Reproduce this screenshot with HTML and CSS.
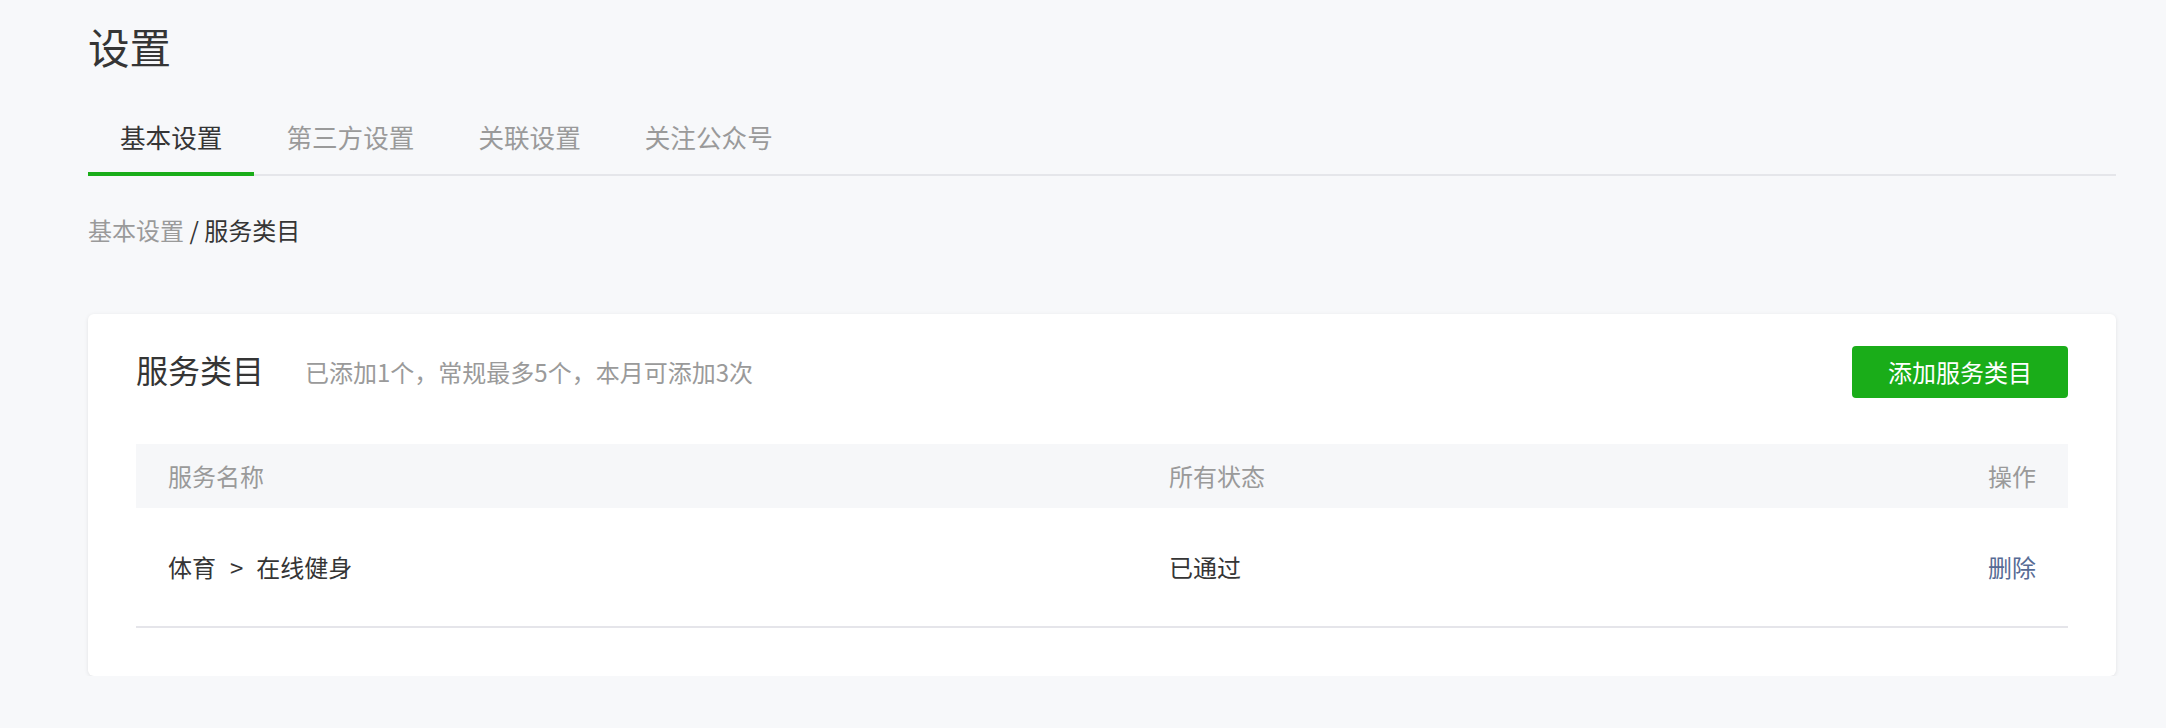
FILE: index.html
```html
<!DOCTYPE html>
<html lang="zh-CN">
<head>
<meta charset="utf-8">
<title>设置</title>
<link rel="stylesheet" href="styles.css">
</head>
<body>
<div class="page">
  <h1 class="page-title">设置</h1>
  <nav class="tabs">
    <a class="tab active">基本设置</a>
    <a class="tab">第三方设置</a>
    <a class="tab">关联设置</a>
    <a class="tab">关注公众号</a>
  </nav>
  <div class="breadcrumb"><span class="crumb-link">基本设置</span> / <span class="crumb-current">服务类目</span></div>
  <section class="card">
    <div class="card-head">
      <h2 class="card-title">服务类目</h2>
      <span class="card-hint">已添加1个，常规最多5个，本月可添加3次</span>
      <button class="btn-primary">添加服务类目</button>
    </div>
    <div class="table">
      <div class="thead">
        <div class="cell c-name">服务名称</div>
        <div class="cell c-status">所有状态</div>
        <div class="cell c-op">操作</div>
      </div>
      <div class="trow">
        <div class="cell c-name">体育<span class="sep">&gt;</span>在线健身</div>
        <div class="cell c-status">已通过</div>
        <div class="cell c-op"><a class="link">删除</a></div>
      </div>
    </div>
  </section>
</div>
</body>
</html>
```

FILE: styles.css
```css
html, body {
  margin: 0;
  padding: 0;
  background: #f7f8fa;
}
body {
  font-family: "Noto Sans CJK SC", "Noto Sans", sans-serif;
  color: #353535;
}
.page {
  width: 2028px;
  padding: 18px 0 0 88px;
}
.page-title {
  margin: 0;
  font-size: 41.6px;
  line-height: 56px;
  font-weight: 400;
  color: #353535;
}
.tabs {
  display: flex;
  margin-top: 43px;
  border-bottom: 2px solid #e5e6ea;
}
.tab {
  display: block;
  padding: 0 32px 15px;
  font-size: 25.6px;
  line-height: 40px;
  color: #9a9a9a;
  border-bottom: 4px solid transparent;
  margin-bottom: -2px;
}
.tab.active {
  color: #353535;
  border-bottom-color: #1aad19;
}
.breadcrumb {
  margin-top: 38px;
  font-size: 24px;
  line-height: 32px;
  color: #353535;
}
.crumb-link {
  color: #9a9a9a;
}
.card {
  margin-top: 68px;
  background: #fff;
  border-radius: 6px;
  box-shadow: 0 1px 4px rgba(0, 0, 0, 0.09);
  padding: 32px 48px 48px;
}
.card-head {
  display: flex;
  align-items: center;
  height: 52px;
}
.card-title {
  margin: 0 0 6px;
  font-size: 32px;
  line-height: 44px;
  font-weight: 400;
  color: #353535;
}
.card-hint {
  margin-left: 41px;
  font-size: 24px;
  line-height: 32px;
  color: #9a9a9a;
}
.btn-primary {
  margin-left: auto;
  width: 216px;
  height: 52px;
  border: 0;
  border-radius: 4px;
  background: #1aad19;
  color: #fff;
  font-family: inherit;
  font-size: 24px;
  line-height: 52px;
  padding: 0;
}
.table {
  margin-top: 46px;
}
.thead, .trow {
  display: grid;
  grid-template-columns: 1001px 1fr 200px;
  align-items: center;
  font-size: 24px;
  line-height: 32px;
}
.thead {
  height: 64px;
  background: #f6f7f9;
  color: #9a9a9a;
}
.trow {
  height: 118px;
  border-bottom: 2px solid #e5e5ea;
  color: #353535;
}
.cell {
  padding: 0 32px;
}
.c-op {
  text-align: right;
}
.sep {
  margin: 0 13px 0 14px;
}
.link {
  color: #576b95;
}
```
